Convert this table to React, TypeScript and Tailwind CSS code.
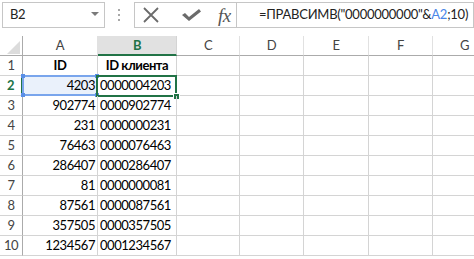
import React from 'react';

type Col = { name: string; width: string };

const COLS: Col[] = [
  { name: 'A', width: 'w-[75px]' },
  { name: 'B', width: 'w-[79px]' },
  { name: 'C', width: 'w-[63px]' },
  { name: 'D', width: 'w-[64px]' },
  { name: 'E', width: 'w-[65px]' },
  { name: 'F', width: 'w-[64px]' },
  { name: 'G', width: 'w-[64px]' },
];

const ROWS: [string, string][] = [
  ['4203', '0000004203'],
  ['902774', '0000902774'],
  ['231', '0000000231'],
  ['76463', '0000076463'],
  ['286407', '0000286407'],
  ['81', '0000000081'],
  ['87561', '0000087561'],
  ['357505', '0000357505'],
  ['1234567', '0001234567'],
];

const font = { fontFamily: 'Lato, "Noto Sans", sans-serif' };

function CancelIcon() {
  return (
    <svg width="18" height="16" viewBox="0 0 18 16">
      <path d="M2 1 L16 15 M16 1 L2 15" stroke="#6b6b6b" strokeWidth="1.8" fill="none" />
    </svg>
  );
}

function EnterIcon() {
  return (
    <svg width="21" height="14" viewBox="0 0 21 14">
      <path d="M1 7 L4 5 L8 9 L18 1 L20 3.5 L8 13 Z" fill="#6b6b6b" />
    </svg>
  );
}

function FormulaBar() {
  return (
    <div className="flex h-[36px] items-start pt-[2px]">
      {/* name box */}
      <div className="ml-[2px] flex h-[26px] w-[103px] items-center justify-between border border-[#c6c6c6] pl-[7px] pr-[5px] text-[13px] text-[#222]">
        <span>B2</span>
        <svg width="8" height="5" viewBox="0 0 8 5" className="mb-[2px]">
          <path d="M0 0 H8 L4 4 Z" fill="#7a7a7a" />
        </svg>
      </div>
      {/* grip */}
      <div className="ml-[13px] mr-[14px] flex h-[26px] flex-col items-center justify-center gap-[3px]">
        <div className="h-[2px] w-[2px] bg-[#a8a8a8]" />
        <div className="h-[2px] w-[2px] bg-[#a8a8a8]" />
        <div className="h-[2px] w-[2px] bg-[#a8a8a8]" />
      </div>
      {/* cancel / enter / insert function */}
      <div className="flex h-[26px] w-[103px] items-center border border-[#c6c6c6] pl-[7px]">
        <CancelIcon />
        <div className="ml-[21px]">
          <EnterIcon />
        </div>
        <span
          className="ml-[16px] text-[19px] italic leading-none text-[#555]"
          style={{ fontFamily: '"Liberation Serif", serif' }}
        >
          fx
        </span>
      </div>
      {/* formula input */}
      <div className="-ml-[1px] flex h-[26px] flex-1 items-center overflow-hidden whitespace-nowrap border border-[#c6c6c6] pl-[22px] text-[13px] tracking-[-0.25px] text-[#222]">
        =ПРАВСИМВ("0000000000"&amp;<span className="text-[#4a86e8]">A2</span>;10)
      </div>
    </div>
  );
}

function HeaderRow() {
  return (
    <div className="flex h-[20px]">
      <div className="relative w-[23px] shrink-0 border-b border-r border-[#ababab]">
        <svg width="13" height="13" viewBox="0 0 13 13" className="absolute bottom-[1px] right-[2px]">
          <path d="M13 0 V13 H0 Z" fill="#dcdcdc" />
        </svg>
      </div>
      {COLS.map((c) =>
        c.name === 'B' ? (
          <div
            key={c.name}
            className={`${c.width} flex shrink-0 items-center justify-center border-b-2 border-r border-b-[#217346] border-r-[#d4d4d4] bg-[#e1e1e1] pt-[1px] text-[13px] font-bold text-[#217346]`}
          >
            {c.name}
          </div>
        ) : (
          <div
            key={c.name}
            className={`${c.width} flex shrink-0 items-center justify-center border-b border-r border-b-[#ababab] border-r-[#e1e1e1] text-[13px] text-[#444]`}
          >
            {c.name}
          </div>
        )
      )}
    </div>
  );
}

function RowHeader({ n, selected }: { n: number; selected?: boolean }) {
  return selected ? (
    <div className="flex w-[23px] shrink-0 items-center justify-center border-b border-r-2 border-b-[#d4d4d4] border-r-[#217346] text-[13px] font-bold text-[#217346]">
      {n}
    </div>
  ) : (
    <div className="flex w-[23px] shrink-0 items-center justify-center border-b border-r border-b-[#d4d4d4] border-r-[#ababab] text-[13px] text-[#444]">
      {n}
    </div>
  );
}

function Handle({ pos }: { pos: string }) {
  return <div className={`absolute h-[4px] w-[4px] bg-[#5a8fe6] ${pos}`} />;
}

export default function App() {
  return (
    <div className="h-[259px] w-[474px] overflow-hidden bg-white tracking-[-0.45px]" style={font}>
      <FormulaBar />
      <HeaderRow />

      {/* row 1: titles */}
      <div className="flex h-[20px]">
        <RowHeader n={1} />
        <div className="flex w-[75px] shrink-0 items-center justify-center border-b border-r border-[#d4d4d4] text-[13px] font-bold text-black">
          ID
        </div>
        <div className="flex w-[79px] shrink-0 items-center justify-center border-b border-r border-[#d4d4d4] text-[13px] font-bold text-black">
          ID клиента
        </div>
        {COLS.slice(2).map((c) => (
          <div key={c.name} className={`${c.width} shrink-0 border-b border-r border-[#d4d4d4]`} />
        ))}
      </div>

      {ROWS.map(([id, padded], i) => {
        const active = i === 0;
        return (
          <div key={id} className="flex h-[20px]">
            <RowHeader n={i + 2} selected={active} />
            <div
              className={`relative flex w-[75px] shrink-0 items-center justify-end border-b border-r border-[#d4d4d4] pr-[2px] text-[13px] text-black ${
                active ? 'bg-[#eaf1fb]' : ''
              }`}
            >
              {active && (
                <>
                  <div className="absolute -left-[1px] -top-[1px] bottom-[-1px] right-[-1px] border-2 border-[#79a5ec]" />
                  <Handle pos="-left-[2px] -top-[2px]" />
                  <Handle pos="-right-[2px] -top-[2px]" />
                  <Handle pos="-left-[2px] -bottom-[2px]" />
                  <Handle pos="-right-[2px] -bottom-[2px]" />
                </>
              )}
              <span className="relative">{id}</span>
            </div>
            <div className="relative flex w-[79px] shrink-0 items-center border-b border-r border-[#d4d4d4] pl-[2px] text-[13px] text-black">
              {active && (
                <>
                  <div className="absolute -left-[2px] -top-[1px] bottom-[-2px] right-[-1px] border-2 border-[#217346]" />
                  <div className="absolute -bottom-[5px] -right-[4px] h-[7px] w-[7px] border border-white bg-[#217346]" />
                </>
              )}
              <span className="relative">{padded}</span>
            </div>
            {COLS.slice(2).map((c) => (
              <div key={c.name} className={`${c.width} shrink-0 border-b border-r border-[#d4d4d4]`} />
            ))}
          </div>
        );
      })}
    </div>
  );
}
